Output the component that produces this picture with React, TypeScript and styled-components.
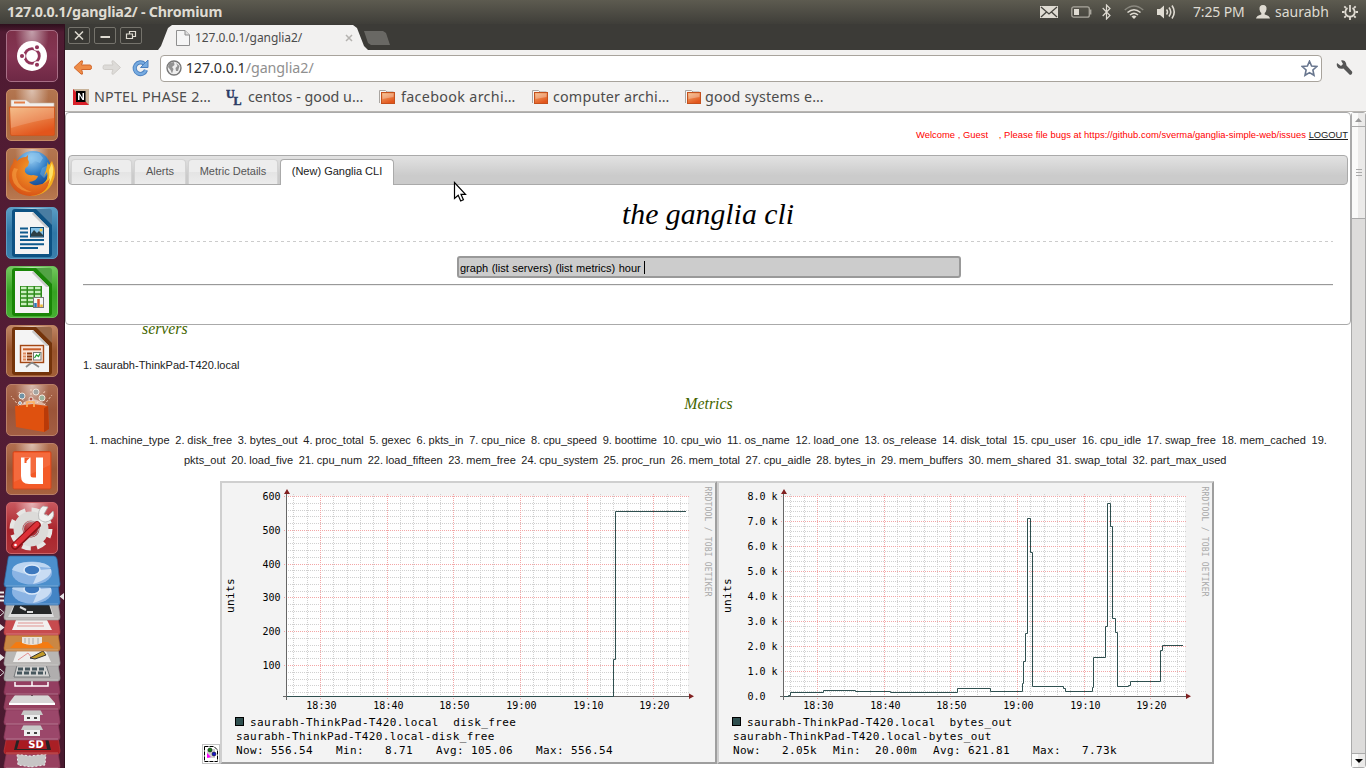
import React from 'react';
import styled, { createGlobalStyle } from 'styled-components';

const GlobalStyle = createGlobalStyle`
  * { box-sizing: border-box; }
  body { margin: 0; overflow: hidden; background: #fff; }
`;

const UI = `'Noto Sans', 'Open Sans', sans-serif`;
const SANS = `'Liberation Sans', Arial, sans-serif`;

const Desktop = styled.div`
  width: 1366px;
  height: 768px;
  display: flex;
  flex-direction: column;
  position: relative;
  overflow: hidden;
`;
const MenuBar = styled.header`
  height: 24px;
  flex: none;
  display: flex;
  align-items: center;
  padding: 0 8px 0 7px;
  background: linear-gradient(#5d5b50, #3f3e39);
  color: #dfdbd2;
  font-family: ${UI};
`;
const Label = styled.span<{ $size: number; $space?: number; $width?: number; $bold?: boolean; $color?: string }>`
  font-size: ${p => p.$size}px;
  line-height: 20px;
  letter-spacing: ${p => p.$space ?? 0}px;
  width: ${p => (p.$width ? `${p.$width}px` : 'auto')};
  font-weight: ${p => (p.$bold ? 700 : 400)};
  color: ${p => p.$color ?? 'inherit'};
  white-space: nowrap;
  flex: none;
`;
const Indicators = styled.div`
  margin-left: auto;
  display: flex;
  align-items: center;
`;
const Indicator = styled.svg<{ $gap: number }>`
  display: block;
  margin-right: ${p => p.$gap}px;
`;
const Workspace = styled.div`
  flex: 1;
  display: flex;
  min-height: 0;
`;
const Launcher = styled.nav`
  width: 65px;
  flex: none;
  display: flex;
  flex-direction: column;
  padding: 6px 0 0 6px;
  gap: 7px;
  background: linear-gradient(#2d0f1c, #4f1b32 8px, #541d35 50%, #491a2f);
  border-right: 1px solid #32101f;
`;
const Tile = styled.div<{ $bg: string; $edge: string }>`
  width: 52px;
  height: 52px;
  flex: none;
  border-radius: 5px;
  border: 1px solid ${p => p.$edge};
  background: radial-gradient(ellipse at 50% 0, rgba(255,255,255,.55), rgba(255,255,255,0) 48%), ${p => p.$bg};
  svg { display: block; margin: -1px; }
`;
const Pile = styled.svg`
  display: block;
  flex: none;
  margin: -6px 0 0 -6px;
`;
const Browser = styled.main`
  flex: 1;
  display: flex;
  flex-direction: column;
  min-width: 0;
`;
const TabStrip = styled.div`
  height: 26px;
  flex: none;
  display: flex;
  align-items: flex-start;
  padding-left: 3px;
  background: #3c3b37;
`;
const WindowButton = styled.div`
  width: 22px;
  height: 17px;
  margin: 3px 4px 0 0;
  border: 1px solid #75736c;
  border-radius: 2px;
  background: #393834;
  svg { display: block; }
`;
const BrowserTab = styled.div`
  width: 210px;
  height: 25px;
  margin: 1px 0 0 12px;
  display: flex;
  align-items: center;
  padding-left: 18px;
  background: #f2f1f0;
  clip-path: polygon(0 100%, 3px 21px, 10px 3px, 14px 0, 195px 0, 199px 3px, 206px 21px, 210px 100%);
  font-family: ${UI};
  color: #4c4c4c;
`;
const TabTitle = styled(Label)`
  margin: 0 4px 0 5px;
`;
const NewTab = styled.div`
  width: 26px;
  height: 14px;
  margin: 7px 0 0 -4px;
  background: #696864;
  clip-path: polygon(0 0, 19px 0, 22px 2px, 26px 14px, 7px 14px, 4px 12px);
`;
const Toolbar = styled.div`
  height: 36px;
  flex: none;
  display: flex;
  align-items: center;
  padding: 0 13px 0 8px;
  background: #f2f1f0;
`;
const AddressBar = styled.div`
  width: 1162px;
  height: 27px;
  display: flex;
  align-items: center;
  padding: 0 3px 0 5px;
  border: 1px solid #a8a39c;
  border-radius: 4px;
  background: #fff;
  font-family: ${UI};
`;
const Pusher = styled.div`flex: 1;`;
const Bookmarks = styled.div`
  height: 26px;
  flex: none;
  display: flex;
  align-items: center;
  padding: 0 0 4px 8px;
  background: #f2f1f0;
  border-bottom: 1px solid #b8b5b1;
  font-family: ${UI};
  color: #4c4c4c;
`;
const Bookmark = styled.div<{ $gap?: number }>`
  width: 153px;
  display: flex;
  align-items: center;
  gap: ${p => p.$gap ?? 4}px;
  svg { flex: none; }
`;
const Viewport = styled.div`
  flex: 1;
  display: flex;
  min-height: 0;
`;
const Page = styled.section`
  width: 1286px;
  flex: none;
  overflow: hidden;
  background: #fff;
  font-family: ${SANS};
  font-size: 11px;
  color: #222;
`;
const Panel = styled.div`
  position: relative;
  height: 213px;
  width: 1286px;
  border: 1px solid #aaa;
  border-radius: 4px;
  padding: 0 2px;
  background: #fff;
`;
const Welcome = styled.div`
  height: 42px;
  padding-top: 16px;
  text-align: right;
  line-height: 12px;
  font-size: 9.4px;
  letter-spacing: 0.04px;
  white-space: pre;
  color: #f00;
  u { color: #212121; letter-spacing: -0.05px; }
`;
const Tabs = styled.div`
  height: 30px;
  display: flex;
  padding: 3px 2px 0;
  gap: 2px;
  border: 1px solid #aaa;
  border-radius: 4px;
  background: linear-gradient(#e2e2e2, #cbcbcb 70%);
`;
const PageTab = styled.div<{ $width: number; $active?: boolean }>`
  width: ${p => p.$width}px;
  height: ${p => (p.$active ? 26 : 25)}px;
  padding-top: 5px;
  text-align: center;
  line-height: 13px;
  border: 1px solid ${p => (p.$active ? '#aaa' : '#d3d3d3')};
  border-bottom: 0;
  border-radius: 4px 4px 0 0;
  color: ${p => (p.$active ? '#212121' : '#555')};
  background: ${p => (p.$active ? '#fff' : 'linear-gradient(#ededed 50%, #e4e4e4 50%, #ececec)')};
`;
const Title = styled.h1`
  margin: 0 15px;
  height: 56px;
  padding-top: 12px;
  text-align: center;
  font: italic 29.75px/34px 'Liberation Serif', serif;
  color: #000;
`;
const Dashes = styled.div`
  height: 1px;
  margin: 0 15px;
  background: repeating-linear-gradient(90deg, #ccc 0 3px, transparent 3px 6px);
`;
const Command = styled.div`
  width: 504px;
  height: 22px;
  margin: 14px 0 0 389px;
  padding: 1px 0 0 1px;
  display: flex;
  align-items: center;
  border: 2px solid #999;
  border-radius: 3px;
  background: #ccc;
  color: #000;
  word-spacing: 0.45px;
`;
const Caret = styled.i`
  width: 1px;
  height: 13px;
  margin-left: 3px;
  background: #000;
`;
const Rule = styled.div`
  height: 2px;
  margin: 6px 15px 0;
  border-top: 1px solid #999;
  border-bottom: 1px solid #eee;
`;
const Heading = styled.h2<{ $left?: boolean }>`
  margin: ${p => (p.$left ? '-5px' : '0')} 0 0;
  padding-left: ${p => (p.$left ? 77 : 1)}px;
  text-align: ${p => (p.$left ? 'left' : 'center')};
  font: italic 15.8px/18px 'Liberation Serif', serif;
  color: #446600;
`;
const ServerLine = styled.p`
  margin: 21px 0 0 18px;
  line-height: 13px;
`;
const MetricBlock = styled.div<{ $gap: number }>`
  margin-top: ${p => p.$gap}px;
`;
const MetricLine = styled.p<{ $indent: number; $word: number }>`
  margin: 0;
  padding-left: ${p => p.$indent}px;
  line-height: 20px;
  word-spacing: ${p => p.$word}px;
  white-space: pre;
`;
const Graphs = styled.div`
  display: flex;
  justify-content: center;
  align-items: flex-end;
  margin-top: 11px;
`;
const AltImage = styled.svg`
  flex: none;
`;
const Graph = styled.svg`
  display: block;
  flex: none;
  font-family: 'DejaVu Sans Mono', monospace;
`;
const Scrollbar = styled.div`
  width: 15px;
  flex: none;
  display: flex;
  flex-direction: column;
  border: 1px solid #aaa;
  border-radius: 3px;
  background: #dddcdb;
`;
const ScrollPart = styled.div<{ $height: number; $end?: boolean }>`
  height: ${p => p.$height}px;
  margin-top: ${p => (p.$end ? 'auto' : '0')};
  display: flex;
  align-items: center;
  justify-content: center;
  border-top: ${p => (p.$end ? '1px solid #aaa' : '0')};
  border-bottom: ${p => (p.$end ? '0' : '1px solid #aaa')};
  background: linear-gradient(90deg, #fafaf9 50%, #ebeae9 50%);
`;
const Pointer = styled.svg`
  position: absolute;
  left: 453px;
  top: 181px;
`;

type Pt = [number, number];
type GraphProps = {
  metric: string;
  majors: { y: number; label: string }[];
  minors: number[];
  steps: Pt[];
  metricX: number;
  stats: { x: number; text: string }[];
};

const xAt = (minute: number) => Math.round(100 + minute * (20 / 3)) + 0.5;

function RrdGraph({ metric, majors, minors, steps, metricX, stats }: GraphProps) {
  const minutes = Array.from({ length: 30 }, (_, i) => -4 + i * 2).filter(m => m <= 54);
  const d = steps.map(([x, y], i) => (i === 0 ? `M${x} ${y}` : `H${x}V${y}`)).join('');
  const text = { fontSize: 11, letterSpacing: 0.37 };
  return (
    <Graph width="497" height="283" viewBox="0 0 497 283">
      <rect width="497" height="283" fill="#f3f3f3" />
      <path d="M0 0H497L495 2H2V281L0 283Z" fill="#cfcfcf" />
      <path d="M497 0V283H0L2 281H495V2Z" fill="#9e9e9e" />
      <rect x="67" y="15" width="401" height="200" fill="#fff" />
      <g stroke="#d0d0d0" strokeDasharray="1 1">
        {minors.map(y => <path key={y} d={`M66 ${y}H469`} />)}
        {minutes.filter(m => m % 10).map(m => <path key={m} d={`M${xAt(m)} 13V217`} />)}
      </g>
      <g stroke="#f3a6a6" strokeDasharray="1 1">
        {majors.map(m => <path key={m.y} d={`M64 ${m.y}H469`} />)}
        {minutes.filter(m => m % 10 === 0).map(m => <path key={m} d={`M${xAt(m)} 13V218`} />)}
      </g>
      <path d="M66.5 12V219M63 215.5H470" stroke="#666" />
      <path d="M64 13H70L67 8ZM469 212.500V218L474 215.200Z" fill="#802020" />
      <path d={d} fill="none" stroke="#2f4f4f" />
      <g fontSize="10">
        {majors.map(m => <text key={m.y} x="60.500" y={m.y + 3.5} textAnchor="end">{m.label}</text>)}
        {['18:30', '18:40', '18:50', '19:00', '19:10', '19:20'].map((t, i) => (
          <text key={t} x={xAt(i * 10) + 0.9} y="228" textAnchor="middle">{t}</text>
        ))}
      </g>
      <text transform="translate(14 132) rotate(-90)" {...text}>units</text>
      <text transform="translate(485 5.500) rotate(90)" fontSize="8" letterSpacing=".2" fill="#a8a8a8">RRDTOOL / TOBI OETIKER</text>
      <rect x="15.500" y="236.500" width="8" height="8" fill="#2f4f4f" stroke="#000" />
      <g {...text}>
        <text x="30" y="245">saurabh-ThinkPad-T420.local</text>
        <text x={metricX} y="245">{metric}</text>
        <text x="16" y="259">saurabh-ThinkPad-T420.local-{metric}</text>
        {stats.map(s => <text key={s.x} x={s.x} y="273">{s.text}</text>)}
      </g>
    </Graph>
  );
}

const diskMajors = [600, 500, 400, 300, 200, 100].map(v => ({ y: Math.round(15 + (600 - v) * 0.338) + 0.5, label: String(v) }));
const diskMinors = Array.from({ length: 30 }, (_, i) => 600 - i * 20).filter(v => v % 100).map(v => Math.round(15 + (600 - v) * 0.338) + 0.5);
const byteMajors = [8, 7, 6, 5, 4, 3, 2, 1, 0].map(v => ({ y: 215.5 - v * 25, label: v ? `${v}.0 k` : '0.0\u00a0\u00a0' }));
const byteMinors = Array.from({ length: 40 }, (_, i) => i).filter(i => i % 5).map(i => 215.5 - i * 5);

const diskSteps: Pt[] = [[67, 215.5], [393.5, 178.5], [395.5, 30.5], [466, 30.5]];
const byteSteps: Pt[] = [
  [67, 215.5], [71.5, 214.5], [73.5, 211.5], [106.5, 209.5], [138.5, 210.5], [173.5, 211.5], [240.5, 207.5],
  [273.5, 210.5], [305.5, 202.5], [306.5, 180.5], [308.5, 152.5], [310.5, 37.5], [313.5, 71.5], [315.5, 205.5],
  [346.5, 207.5], [348.5, 210.5], [375.5, 206.5], [376.5, 176.5], [388.5, 145.5], [390.5, 22.5], [393.5, 45.5],
  [395.5, 137.5], [398.5, 151.5], [400.5, 205.5], [411.5, 204.5], [413.5, 200.5], [443.5, 169.5], [445.5, 164.5], [466, 164.5],
];

const FolderMark = () => (
  <svg width="17" height="16" viewBox="0 0 17 16">
    <path d="M.5 14V1.500H6.500L8 3H14.500V6" fill="#f8f7f6" stroke="#a9a5a1" />
    <rect x="2.500" y="3.500" width="13" height="11" fill="url(#fold)" stroke="#c4511e" />
    <path d="M3.500 4.500H14.500V8L3.500 10Z" fill="#fff" opacity=".28" />
  </svg>
);

function Office({ dark, children }: { dark: string; children: React.ReactNode }) {
  return (
    <svg width="52" height="52" viewBox="0 0 52 52">
      <rect x="6" y="2" width="40" height="48" rx="3" fill={dark} />
      <path d="M30 2H43Q46 2 46 5V18Z" fill="#fff" opacity=".25" />
      <path d="M9 5H27L43 21V47H9Z" fill="#f4f4f4" />
      <path d="M27 5L43 21H40L26 7Z" fill="#c9c9c9" />
      {children}
    </svg>
  );
}

const pile: { top: number; bottom: number; color: string; edge: string }[] = [
  { top: 742, bottom: 769, color: '#98405f', edge: '#8a3655' },
  { top: 727, bottom: 754, color: '#a91f25', edge: '#bb3a3c' },
  { top: 712, bottom: 740, color: '#9b476a', edge: '#8d3b5c' },
  { top: 698, bottom: 725, color: '#9b476a', edge: '#8d3b5c' },
  { top: 683, bottom: 710, color: '#95405f', edge: '#8d3b5c' },
  { top: 668, bottom: 695, color: '#943e61', edge: '#81304f' },
  { top: 653, bottom: 681, color: '#b0aeae', edge: '#989696' },
  { top: 638, bottom: 666, color: '#b8b6b4', edge: '#a09e9d' },
  { top: 622, bottom: 651, color: '#ca8744', edge: '#b56b2d' },
  { top: 606, bottom: 635, color: '#c74b4e', edge: '#b43c42' },
  { top: 591, bottom: 620, color: '#b7b5b4', edge: '#999797' },
  { top: 573, bottom: 605, color: '#4384c5', edge: '#316ca8' },
  { top: 556, bottom: 587, color: '#4c8fcc', edge: '#2a659f' },
];

function Disc({ y }: { y: number }) {
  return (
    <g>
      <ellipse cx="32" cy={y} rx="20" ry="11.500" fill="#8bb4e4" />
      <path d={`M12 ${y - 3}Q14 ${y - 11} 30 ${y - 11}Q46 ${y - 12} 51 ${y - 5}L31 ${y - 7}Q22 ${y - 6} 25 ${y + 1}Z`} fill="#bdd6f1" />
      <path d={`M39 ${y - 3}L51 ${y - 4}Q53 ${y + 5} 33 ${y + 11}Z`} fill="#c9dcf3" />
      <ellipse cx="32" cy={y - 3} rx="8" ry="5" fill="#3c78be" stroke="#dceafa" strokeWidth="1.500" />
    </g>
  );
}

function PileIcon({ i, b }: { i: number; b: number }) {
  switch (i) {
    case 12: case 11: return <Disc y={b - (i === 12 ? 14 : 13)} />;
    case 10: return <g><path d={`M14 ${b - 15}H50L54 ${b - 3}H8Z`} fill="#ddd" /><path d={`M15 ${b - 16}H49L52 ${b - 6}H11Z`} fill="#252728" /><path d={`M20 ${b - 13}L26 ${b - 10}M27 ${b - 8}H33`} stroke="#ddd" strokeWidth="2" /></g>;
    case 9: return <g><path d={`M16 ${b - 15}H47L52 ${b - 5}H12Z`} fill="#f2f0ef" /><path d={`M18 ${b - 12}H43M17 ${b - 9}H44`} stroke="#e09391" /></g>;
    case 8: return <g><path d={`M16 ${b - 9}H48L54 ${b - 3}H10Z`} fill="#f37b12" /><path d={`M22 ${b - 14}H42V${b - 8}Q32 ${b - 4} 22 ${b - 8}Z`} fill="#e9e3db" /><path d={`M25 ${b - 13}V${b - 8}M29 ${b - 13}V${b - 7}M33 ${b - 13}V${b - 7}M38 ${b - 13}V${b - 7}`} stroke="#aaa" /></g>;
    case 7: return <g><path d={`M17 ${b - 15}H46L51 ${b - 4}H13Z`} fill="#efeeed" /><path d={`M18 ${b - 6}L28 ${b - 13}L32 ${b - 8}`} stroke="#e39090" fill="none" /><path d={`M30 ${b - 8}L43 ${b - 15}L46 ${b - 11}L35 ${b - 7}Z`} fill="#c29b28" stroke="#333" /></g>;
    case 6: return <g><path d={`M17 ${b - 16}H46L50 ${b - 4}H14Z`} fill="#d3d3d2" stroke="#737779" /><path d={`M18 ${b - 12}H45M17 ${b - 8}H46`} stroke="#46565d" strokeWidth="3" strokeDasharray="5 2" /></g>;
    case 5: return <path d={`M15 ${b - 13}V${b - 9}H48V${b - 13}M32 ${b - 15}V${b - 9}M15 ${b - 9}H48`} fill="none" stroke="#fff" strokeWidth="1.500" />;
    case 4: return <g><path d={`M15 ${b - 15}H48L55 ${b - 7}H9Z`} fill="#d8d6d6" /><path d={`M9 ${b - 7}H55V${b - 5}H9Z`} fill="#fff" /><circle cx="32" cy={b - 15} r="1" fill="#333" /></g>;
    case 3: case 2: return <g><path d={`M24 ${b - 16}H40L43 ${b - 10}H21Z`} fill="#c8c7c7" /><rect x="24" y={b - 10} width="16" height="6" fill="#eee" /><path d={`M27 ${b - 7}H30M34 ${b - 7}H37`} stroke="#444" strokeWidth="2" /></g>;
    case 1: return <g><path d={`M17 ${b - 16}H48L51 ${b - 4}H14Z`} fill="#272323" /><path d={`M20 ${b - 16}H45L47 ${b - 5}H17Z`} fill="#a91921" /><text x="36" y={b - 6} fontFamily="DejaVu Sans" fontSize="10" fontWeight="700" textAnchor="middle" fill="#fff">SD</text></g>;
    default: return <path d={`M17 ${b - 15}L30 ${b - 13}L46 ${b - 15}L45 ${b - 4}L31 ${b - 2}L18 ${b - 4}Z`} fill="#c7c5c5" stroke="#eee" strokeDasharray="2 2" />;
  }
}

const line1 = ['machine_type', 'disk_free', 'bytes_out', 'proc_total', 'gexec', 'pkts_in', 'cpu_nice', 'cpu_speed', 'boottime', 'cpu_wio', 'os_name', 'load_one', 'os_release', 'disk_total', 'cpu_user', 'cpu_idle', 'swap_free', 'mem_cached'];
const line2 = ['load_five', 'cpu_num', 'load_fifteen', 'mem_free', 'cpu_system', 'proc_run', 'mem_total', 'cpu_aidle', 'bytes_in', 'mem_buffers', 'mem_shared', 'swap_total', 'part_max_used'];

export default function App() {
  return (
    <Desktop>
      <GlobalStyle />
      <MenuBar>
        <Label $size={14.3} $space={-0.2} $bold>127.0.0.1/ganglia2/ - Chromium</Label>
        <Indicators>
          <Indicator $gap={13} width="18" height="12" viewBox="0 0 18 12">
            <rect width="18" height="12" fill="#dfdbd2" />
            <path d="M1 1L9 8L17 1M1 11L6.500 6M17 11L11.500 6" stroke="#46453f" strokeWidth="1.300" fill="none" />
          </Indicator>
          <Indicator $gap={10} width="21" height="12" viewBox="0 0 21 12">
            <rect x=".8" y=".8" width="17.500" height="10.400" rx="2" fill="none" stroke="#a9a69d" strokeWidth="1.300" />
            <rect x="3" y="3" width="5" height="6" fill="#dfdbd2" /><path d="M19.700 3.500V8.500" stroke="#a9a69d" strokeWidth="1.400" />
          </Indicator>
          <Indicator $gap={13} width="9" height="16" viewBox="0 0 9 16">
            <path d="M.7 4L8 11.500L4.500 15V1L8 4.500L.7 12" fill="none" stroke="#dfdbd2" strokeWidth="1.200" />
          </Indicator>
          <Indicator $gap={12} width="20" height="14" viewBox="0 0 20 14">
            <path d="M.8 5Q10-3 19.200 5" stroke="#8a887f" fill="none" strokeWidth="1.600" />
            <path d="M3.500 7.500Q10 2 16.500 7.500M6 10Q10 6.500 14 10" stroke="#dfdbd2" fill="none" strokeWidth="1.600" />
            <path d="M7.500 11.500Q10 9.500 12.500 11.500L10 14Z" fill="#dfdbd2" />
          </Indicator>
          <Indicator $gap={16} width="21" height="16" viewBox="0 0 21 16">
            <path d="M1 5H4L8 1.500V14.500L4 11H1Z" fill="#dfdbd2" />
            <path d="M10.500 5.500Q12.500 8 10.500 10.500M13 3.500Q16.500 8 13 12.500M16 1.500Q20.500 8 16 14.500" fill="none" stroke="#dfdbd2" strokeWidth="1.600" />
          </Indicator>
          <Label $size={14} $space={-0.15} $width={63}>7:25 PM</Label>
          <Indicator $gap={5} width="14" height="14" viewBox="0 0 14 14">
            <path d="M7 0Q11 0 10.500 4.500Q10 7 8.700 8V9.500Q13.500 10.500 14 13.500H0Q.5 10.500 5.300 9.500V8Q4 7 3.500 4.500Q3 0 7 0Z" fill="#dfdbd2" />
          </Indicator>
          <Label $size={14} $width={67}>saurabh</Label>
          <Indicator $gap={0} width="16" height="16" viewBox="0 0 16 16">
            <path d="M5.500 4A4.700 4.700 0 1 0 10.500 4M8 1V8" fill="none" stroke="#dfdbd2" strokeWidth="1.800" />
            <path d="M0 8H2.500M13.500 8H16M8 13V16M2.300 2.300L4 4M13.700 2.300L12 4M2.300 13.700L4 12M13.700 13.700L12 12" stroke="#dfdbd2" strokeWidth="1.800" />
          </Indicator>
        </Indicators>
      </MenuBar>
      <Workspace>
        <Launcher>
          <Tile $bg="linear-gradient(#7d3049, #843553 50%, #6e2845)" $edge="#a86f86">
            <svg width="52" height="52" viewBox="0 0 52 52">
              <circle cx="26" cy="26" r="15" fill="#fff" />
              <circle cx="26" cy="26" r="7.300" fill="none" stroke="#91355a" strokeWidth="2.800" />
              <g stroke="#fff" strokeWidth="1.500" fill="#91355a">
                <circle cx="16" cy="26" r="2.800" /><circle cx="31" cy="17.300" r="2.800" /><circle cx="31" cy="34.700" r="2.800" />
              </g>
            </svg>
          </Tile>
          <Tile $bg="linear-gradient(#b37650, #a9673f 60%, #b06c43)" $edge="#c88e68">
            <svg width="52" height="52" viewBox="0 0 52 52">
              <defs>
                <linearGradient id="fold" x1="0" y1="0" x2=".5" y2="1"><stop offset="0" stopColor="#f3b275" /><stop offset="1" stopColor="#e2551c" /></linearGradient>
                <radialGradient id="fox" cx=".6" cy=".35" r=".8"><stop offset="0" stopColor="#f9a42a" /><stop offset="1" stopColor="#d14312" /></radialGradient>
                <radialGradient id="globe" cx=".45" cy=".2" r=".9"><stop offset="0" stopColor="#9fd3f5" /><stop offset=".5" stopColor="#2e7bc4" /><stop offset="1" stopColor="#123e86" /></radialGradient>
              </defs>
              <path d="M5 20V11H20L24 14H48V20Z" fill="#f2efec" stroke="#c7b1a2" strokeWidth=".6" />
              <path d="M8 13.500H19" stroke="#e37e47" strokeWidth="2" />
              <path d="M3.500 18H48.500V45Q48.500 46.500 47 46.500H6Q4.500 46.500 4.500 45Z" fill="url(#fold)" stroke="#cf571f" />
              <path d="M4 19H48V29Q28 32 5 39Z" fill="#fff" opacity=".16" />
            </svg>
          </Tile>
          <Tile $bg="linear-gradient(#b37650, #a9673f 60%, #b97850)" $edge="#c88e68">
            <svg width="52" height="52" viewBox="0 0 52 52">
              <circle cx="27" cy="21" r="18" fill="url(#globe)" />
              <path d="M24 5L33 5L37 10L34 15L29 13L25 16L20 11Z" fill="#8cc5ec" opacity=".6" />
              <path d="M36 20L42 17L43 25L38 30L34 26Z" fill="#8cc5ec" opacity=".35" />
              <path d="M42 9Q41 14 43 17L46 13Q52 25 46 36Q39 48 24 48Q34 43 37 36Q43 31 41 24L38 28Q42 18 42 9Z" fill="#f4ab1c" />
              <path d="M46 15Q50 26 41 39Q44 30 43 22Z" fill="#fee266" />
              <path d="M7 15L8 10L11 13Q15 9 20 9L22 7Q21 11 23 14L22 18Q18 20 19 24Q22 28 27 27L32 28Q31 33 23 34Q27 39 36 36Q42 34 44 30Q42 47 24 48Q7 47 3 31Q2 21 7 15Z" fill="url(#fox)" />
              <path d="M8 20Q4 27 8 35Q14 44 26 44Q13 40 11 31Q9 26 12 21Z" fill="#f6a043" opacity=".6" />
            </svg>
          </Tile>
          <Tile $bg="linear-gradient(#5b9dc4, #2f77a6 50%, #3a80ac)" $edge="#5d9dc4">
            <Office dark="#0d5283">
              <path d="M14 21.500H22M14 25.500H22M14 29.500H22M14 33H38M14 37.200H38M14 41H32" stroke="#0e5a8d" strokeWidth="2" />
              <rect x="24.500" y="20.500" width="13" height="9.500" fill="#86c3e8" stroke="#104b74" />
              <path d="M25 29.500V27L28 23L31 26L33 24L37 28V29.500Z" fill="#2d3f45" /><circle cx="35" cy="23" r="1.500" fill="#f8cc4f" />
            </Office>
          </Tile>
          <Tile $bg="linear-gradient(#74c85f, #36a222 50%, #45ae31)" $edge="#6dbf5c">
            <Office dark="#198506">
              <rect x="14" y="20" width="22" height="21" fill="#2d8a19" />
              <path d="M15 22H35M15 26H35M15 30H35M15 34H35M15 38H35" stroke="#c9efbd" strokeWidth="2.600" strokeDasharray="5.500 1.500" />
              <rect x="27.500" y="31.500" width="10" height="10" fill="#f4f6f6" stroke="#777" />
              <path d="M29.500 41V37" stroke="#2b76b9" strokeWidth="2.500" /><path d="M32.500 41V33" stroke="#da552a" strokeWidth="2.500" /><path d="M35.500 41V38.500" stroke="#eab831" strokeWidth="2.500" />
            </Office>
          </Tile>
          <Tile $bg="linear-gradient(#bf8564, #98532b 50%, #a25f37)" $edge="#bd8462">
            <Office dark="#74340b">
              <rect x="14.500" y="20.500" width="23" height="17" fill="#fae4d7" stroke="#a34714" strokeWidth="1.400" />
              <path d="M17 24.300H35" stroke="#c85e2a" strokeWidth="2" />
              <path d="M17 28.500H20M17 31.500H20M17 34.500H20" stroke="#df8b5f" strokeWidth="2" /><path d="M21 28.500H26M21 31.500H26M21 34.500H26" stroke="#8c3b12" strokeWidth="2" />
              <rect x="27.500" y="27.500" width="7.500" height="7.500" fill="#fff" stroke="#777" /><path d="M28.500 33L30.500 30L32.500 31.500L34 28.500" stroke="#25a136" fill="none" strokeWidth="1.300" />
              <path d="M26 37V39M25 38L20 42M27 38L33 42" stroke="#8a8a8a" strokeWidth="1.800" />
            </Office>
          </Tile>
          <Tile $bg="linear-gradient(#aa6a50, #9b5438 50%, #a35e43)" $edge="#bb8068">
            <svg width="52" height="52" viewBox="0 0 52 52">
              <path d="M13 22L5 12M19 20L13 8M25 19V3M31 19L39 7M38 21L46 11" stroke="#f9d9c8" strokeDasharray="2 2" />
              <path d="M13 23Q26 8 41 22Z" fill="#fbe5d5" opacity=".6" />
              <g stroke="#eee3da"><circle cx="16" cy="12" r="3" fill="#6f92a6" /><circle cx="30" cy="8" r="3" fill="#a4a5a3" /><circle cx="36" cy="14" r="3" fill="#9bb19a" /><circle cx="25" cy="15" r="2" fill="#b35043" /><circle cx="14" cy="19" r="1.500" fill="#7da6c7" /></g>
              <path d="M9 22L27 20L42 22L43 45L38 48L10 43Z" fill="#df510f" />
              <path d="M38 24L42 22L43 45L38 48Z" fill="#b93a08" />
              <path d="M21 23V18H28V23" fill="none" stroke="#ffb15d" strokeWidth="1.600" />
            </svg>
          </Tile>
          <Tile $bg="linear-gradient(#b16e4f, #9b5535 50%, #a8623f)" $edge="#bb8068">
            <svg width="52" height="52" viewBox="0 0 52 52">
              <rect x="7" y="8.500" width="38" height="37.500" rx="1.500" fill="#f35a28" stroke="#ce471e" />
              <path d="M8 10H44V22L8 39Z" fill="#fff" opacity=".1" />
              <path d="M15 14.500H24.500V32Q24.500 34.500 27 34.500H30V14.500H37V41H23Q15 41 15 33Z" fill="#fff" />
              <path d="M18.500 14.500H24L20.500 18V20H18.500Z" fill="#f35a28" />
            </svg>
          </Tile>
          <Tile $bg="linear-gradient(#c8585e, #a9242b 55%, #ad3137)" $edge="#cc6469">
            <svg width="52" height="52" viewBox="0 0 52 52">
              <circle cx="25" cy="27" r="18.500" fill="none" stroke="#e7e6e4" strokeWidth="6" strokeDasharray="8.500 6.030" />
              <circle cx="25" cy="27" r="13" fill="none" stroke="#dcdbd9" strokeWidth="9" />
              <circle cx="25" cy="27" r="7.500" fill="none" stroke="#b5b5b5" />
              <path d="M31 24L37 17" stroke="#f3f3f1" strokeWidth="5" />
              <path d="M37 4Q31 8 33 17Q39 23 46 17Q49 13 47 9L42 14L38 12L42 5Z" fill="#f2f2f0" stroke="#aaa" strokeWidth=".7" />
              <path d="M9 44L31 23" stroke="#8a1116" strokeWidth="7.500" strokeLinecap="round" /><path d="M9 43.500L31 22.500" stroke="#dd3138" strokeWidth="5" strokeLinecap="round" />
              <circle cx="9.500" cy="43" r="1.300" fill="#fff" />
            </svg>
          </Tile>
          <Pile width="64" height="213" viewBox="0 555 64 213">
            {pile.map((p, i) => (
              <g key={p.top}>
                <path d={`M10 ${p.top}H54Q56 ${p.top} 57 ${p.top + 3}L60 ${p.bottom - 3}Q60 ${p.bottom} 58 ${p.bottom}H6Q4 ${p.bottom} 4 ${p.bottom - 3}L8 ${p.top + 3}Q8 ${p.top} 10 ${p.top}Z`} fill={p.color} stroke={p.edge} strokeWidth=".7" />
                <path d={`M6 ${p.bottom - 1}H58`} stroke="#fff" opacity=".25" />
                <PileIcon i={i} b={p.bottom} />
              </g>
            ))}
            <path d="M0 592.500H4M0 596.500H4M0 600.500H4" stroke="#eee" strokeWidth="2" />
            <path d="M64 593V600L59.500 596.500ZM0 624L4.500 627.500L0 631ZM0 654L4.500 657.500L0 661Z" fill="#e8e4e6" />
            <path d="M0 609L4 612.500L0 616M0 669L4 672.500L0 676" stroke="#ddd" fill="none" />
          </Pile>
        </Launcher>
        <Browser>
          <TabStrip>
            <WindowButton><svg width="20" height="15" viewBox="0 0 20 15"><path d="M6 4L14 12M14 4L6 12" transform="translate(0 -.5)" stroke="#dfdbd2" strokeWidth="1.500" /></svg></WindowButton>
            <WindowButton><svg width="20" height="15" viewBox="0 0 20 15"><path d="M5.500 9H15" stroke="#dfdbd2" strokeWidth="2" /></svg></WindowButton>
            <WindowButton><svg width="20" height="15" viewBox="0 0 20 15"><path d="M8.500 6V3.500H14.500V8.500H12M5.500 6H11.500V10.500H5.500Z" fill="none" stroke="#dfdbd2" strokeWidth="1.200" /></svg></WindowButton>
            <BrowserTab>
              <svg width="14" height="16" viewBox="0 0 14 16"><path d="M.5 .5H9L13.500 5V15.500H.5Z" fill="#f5f5f5" stroke="#8f8f8f" /><path d="M9 .5V5H13.500" fill="#ddd" stroke="#8f8f8f" /></svg>
              <TabTitle $size={12} $space={-0.07} $width={146}>127.0.0.1/ganglia2/</TabTitle>
              <svg width="8" height="8" viewBox="0 0 8 8"><path d="M1 1L7 7M7 1L1 7" stroke="#b5b3b0" strokeWidth="1.500" /></svg>
            </BrowserTab>
            <NewTab />
          </TabStrip>
          <Toolbar>
            <svg width="87" height="20" viewBox="0 0 87 20">
              <path d="M1 9.500L8 3Q10 2 9.500 4.500L8.500 7H17Q18.500 7 18.500 9.500Q18.500 11.500 17 11.500H8.500L9.500 14.500Q10 17 8 16Z" fill="#ee8b46" stroke="#d2662a" />
              <path d="M47.500 9.500L40.500 3Q38.500 2 39 4.500L40 7H31.500Q30 7 30 9.500Q30 11.500 31.500 11.500H40L39 14.500Q38.500 17 40.500 16Z" fill="#dddbd8" stroke="#cfccc8" />
              <path d="M71.500 6A5.800 5.800 0 1 0 73 12" fill="none" stroke="#4c80bf" strokeWidth="4.200" /><path d="M71.500 6A5.800 5.800 0 1 0 73 12" fill="none" stroke="#77abe0" strokeWidth="2.400" />
              <path d="M75 2V9.500H67.500Z" fill="#77abe0" stroke="#4c80bf" />
            </svg>
            <AddressBar>
              <svg width="16" height="16" viewBox="0 0 16 16"><circle cx="8" cy="8" r="7" fill="#eee" stroke="#777" strokeWidth="1.400" /><path d="M3 3L8 2L8.500 5L6 7L7.500 9L6 13.500L4.500 10L2 7ZM10 3L13.500 6L12 11L10 11L9.500 8L11.500 6Z" fill="#929292" /></svg>
              <Label $size={14.3} $space={-0.06} $color="#2e2e2e">&nbsp;127.0.0.1</Label>
              <Label $size={14.3} $space={-0.07} $color="#8f8f8f">/ganglia2/</Label>
              <Pusher />
              <svg width="17" height="17" viewBox="0 0 17 17"><path d="M8.500 1.200L10.600 6L15.800 6.500L11.900 10L13 15.300L8.500 12.600L4 15.300L5.100 10L1.200 6.500L6.400 6Z" fill="#fff" stroke="#69778f" strokeWidth="1.600" /></svg>
            </AddressBar>
            <Pusher />
            <svg width="17" height="17" viewBox="0 0 17 17"><path d="M1 3L5 6L7 4L5 .5Q9-.5 10 3L10.500 5.500L16 11.500Q17 14 14 15L7.500 8.500Q2 10 .7 5Z" fill="#555" /></svg>
          </Toolbar>
          <Bookmarks>
            <Bookmark $gap={5}>
              <svg width="16" height="16" viewBox="0 0 16 16"><rect width="16" height="16" fill="#c8b39a" /><path d="M0 0V16H16Z" fill="#d9202a" /><rect x="3" y="2" width="9.500" height="11" fill="#000" /><path d="M5 11V4H6.500L9.500 9V4H11V11H9.500L6.500 6V11Z" fill="#fff" /></svg>
              <Label $size={14.3} $space={0.22}>NPTEL PHASE 2…</Label>
            </Bookmark>
            <Bookmark>
              <svg width="18" height="20" viewBox="0 0 18 20"><g fontFamily="Liberation Serif" fontWeight="700" fontSize="12" fill="#2c3b66" stroke="#2c3b66" strokeWidth=".5"><text x="0" y="11">U</text><text x="7.500" y="17.500">L</text></g></svg>
              <Label $size={14.3}>centos - good u…</Label>
            </Bookmark>
            <Bookmark $gap={5}><FolderMark /><Label $size={14.3} $space={0.33}>facebook archi…</Label></Bookmark>
            <Bookmark><FolderMark /><Label $size={14.3} $space={0.18}>computer archi…</Label></Bookmark>
            <Bookmark $gap={3}><FolderMark /><Label $size={14.3} $space={0.17}>good systems e…</Label></Bookmark>
          </Bookmarks>
          <Viewport>
            <Page>
              <Panel>
                <Welcome>Welcome , Guest    , Please file bugs at https://github.com/sverma/ganglia-simple-web/issues <u>LOGOUT</u></Welcome>
                <Tabs>
                  <PageTab $width={61}>Graphs</PageTab>
                  <PageTab $width={52}>Alerts</PageTab>
                  <PageTab $width={90}>Metric Details</PageTab>
                  <PageTab $width={114} $active>(New) Ganglia CLI</PageTab>
                </Tabs>
                <Title>the ganglia cli</Title>
                <Dashes />
                <Command>graph (list servers) (list metrics) hour<Caret /></Command>
                <Rule />
              </Panel>
              <Heading $left>servers</Heading>
              <ServerLine>1. saurabh-ThinkPad-T420.local</ServerLine>
              <MetricBlock $gap={23}><Heading>Metrics</Heading></MetricBlock>
              <MetricBlock $gap={17}>
                <MetricLine $indent={24} $word={-0.175}>{line1.map((m, i) => `${i + 1}. ${m}`).join('  ')}  19.</MetricLine>
                <MetricLine $indent={119} $word={-0.28}>pkts_out  {line2.map((m, i) => `${i + 20}. ${m}`).join('  ')}</MetricLine>
              </MetricBlock>
              <Graphs>
                <AltImage width="18" height="20" viewBox="0 0 18 20">
                  <rect x=".5" y=".5" width="17" height="19" fill="#fff" stroke="#c4c4c4" />
                  <path d="M2.500 2.500H12L15.500 6V17.500H2.500Z" fill="#fff" stroke="#000" strokeDasharray="4 1" />
                  <rect x="5" y="5" width="8" height="9" fill="#cfcfcf" /><circle cx="8" cy="6" r="2" fill="#138113" stroke="#000" strokeWidth=".5" /><circle cx="12" cy="10" r="2" fill="#1515c9" stroke="#000" strokeWidth=".5" /><path d="M5 9L9 13L5 14Z" fill="#f0f" />
                </AltImage>
                <RrdGraph metric="disk_free" majors={diskMajors} minors={diskMinors} steps={diskSteps} metricX={233.2}
                  stats={[{ x: 16, text: 'Now:' }, { x: 51, text: '556.54' }, { x: 116, text: 'Min:' }, { x: 165, text: '8.71' }, { x: 216, text: 'Avg:' }, { x: 251, text: '105.06' }, { x: 316, text: 'Max:' }, { x: 351, text: '556.54' }]} />
                <RrdGraph metric="bytes_out" majors={byteMajors} minors={byteMinors} steps={byteSteps} metricX={232.6}
                  stats={[{ x: 16, text: 'Now:' }, { x: 65, text: '2.05k' }, { x: 116, text: 'Min:' }, { x: 158, text: '20.00m' }, { x: 216, text: 'Avg:' }, { x: 251, text: '621.81' }, { x: 316, text: 'Max:' }, { x: 365, text: '7.73k' }]} />
              </Graphs>
            </Page>
            <Scrollbar>
              <ScrollPart $height={14}><svg width="7" height="4"><path d="M0 4L3.500 0L7 4Z" fill="#999" /></svg></ScrollPart>
              <ScrollPart $height={92}><svg width="6" height="8"><path d="M0 .5H6M0 3.500H6M0 6.500H6" stroke="#aaa" /></svg></ScrollPart>
              <ScrollPart $height={14} $end><svg width="8" height="4"><path d="M0 0H8L4 4Z" fill="#000" /></svg></ScrollPart>
            </Scrollbar>
          </Viewport>
        </Browser>
      </Workspace>
      <Pointer width="14" height="22" viewBox="0 0 14 22">
        <path d="M1.500 1.500V17.500L5.200 14.200L7.700 20L10.400 18.800L8 13.300H12.500Z" fill="#fff" stroke="#000" strokeWidth="1.200" />
      </Pointer>
    </Desktop>
  );
}
